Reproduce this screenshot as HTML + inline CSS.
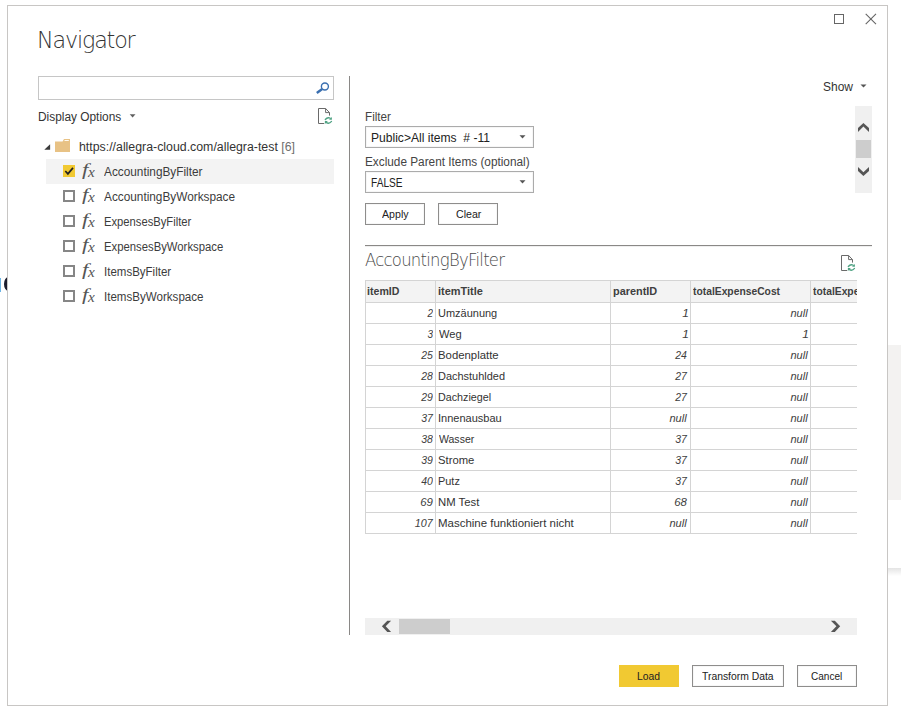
<!DOCTYPE html>
<html lang="en"><head><meta charset="utf-8"><title>Navigator</title>
<style>
html,body{margin:0;padding:0;}
body{width:901px;height:719px;position:relative;overflow:hidden;background:#fff;font-family:'Liberation Sans', sans-serif;}
.t{position:absolute;white-space:pre;line-height:20px;transform-origin:0 50%;}
.t.r{transform-origin:100% 50%;}
.a{position:absolute;}

.dlg{left:7px;top:5px;width:881px;height:701px;box-sizing:border-box;border:1px solid #c8c6c4;background:#fff;}
.box{box-sizing:border-box;border:1px solid #c6c6c6;background:#fff;}
.btn{box-sizing:border-box;border:1px solid #8e8d8c;background:#fff;box-shadow:inset 0 0 0 1px #f7f7f7;}
.cb{box-sizing:border-box;width:12px;height:12px;border:2px solid #868686;background:#fff;left:63px;}
.hl{background:#d4d4d4;height:1px;}
.vl{background:#d4d4d4;width:1px;}
svg{position:absolute;overflow:visible;}

</style></head><body>
<!-- desktop fragments visible behind the dialog -->
<div class="backdrop">
<div class="a" style="left:888px;top:345px;width:13px;height:155px;background:#f3f2f1"></div>
<div class="a" style="left:888px;top:568px;width:13px;height:8px;background:linear-gradient(#e4e4e4,#fff)"></div>
<div class="a" style="left:0;top:278px;width:1px;height:14px;background:#6cb4e4"></div>
<div class="a" style="left:4px;top:276.5px;width:9px;height:14px;box-sizing:border-box;border:3px solid #1c1c2c;border-radius:50%"></div>
</div>
<!-- Navigator dialog frame, title and window buttons -->
<header class="dialog-frame">
<div class="a dlg"></div>
<div class="a" style="left:834px;top:14px;width:10px;height:10px;box-sizing:border-box;border:1px solid #666"></div>
<svg style="left:865px;top:13px" width="12" height="12" viewBox="0 0 12 12"><path d="M0.7 0.9L11 11.2M11 0.9L0.7 11.2" stroke="#666" stroke-width="1.1" fill="none"/></svg>
<div class="a" style="left:349px;top:76px;width:1px;height:559px;background:#8a8886"></div>
<span class="t" style="left:37.30px;top:30px;font-size:23px;transform:scaleX(0.9667);font-family:'DejaVu Sans', 'Liberation Sans', sans-serif;color:#333;font-weight:200;letter-spacing:-1.2px;">Navigator</span>
</header>
<!-- left pane: search, display options, source tree -->
<aside class="tree-pane">
<div class="a box" style="left:38px;top:76px;width:296px;height:24px"></div>
<svg style="left:315px;top:81px" width="16" height="14" viewBox="0 0 16 14"><circle cx="9.9" cy="5.5" r="3.5" fill="none" stroke="#3a6fb0" stroke-width="1.4"/><path d="M7.2 8.1L1.8 12.1" stroke="#3a6fb0" stroke-width="2.5" stroke-linecap="butt"/></svg>
<svg style="left:129px;top:114px" width="8" height="5" viewBox="0 0 8 5"><path d="M0.7 0.3H6.5L3.6 3.4Z" fill="#606060"/></svg>
<svg style="left:318px;top:108px" width="16" height="18" viewBox="0 0 16 18">
<path d="M6.2 15.5H0.5V0.5H7.6L11.5 4.6V7.6" fill="none" stroke="#6a6a6a" stroke-width="1"/>
<path d="M7.6 0.5V4.6H11.5" fill="none" stroke="#6a6a6a" stroke-width="1"/>
<path d="M7.3 11.5Q9.5 8.7 12.4 10.3" fill="none" stroke="#4fa283" stroke-width="1.3" stroke-linecap="round"/>
<path d="M13.5 13.4Q11.3 16.2 8.4 14.7" fill="none" stroke="#4fa283" stroke-width="1.3" stroke-linecap="round"/>
<path d="M13.9 8.9V11.8H11Z" fill="#4fa283"/>
<path d="M6.9 16V13.1H9.8Z" fill="#4fa283"/>
</svg>
<svg style="left:44px;top:144px" width="7" height="6" viewBox="0 0 7 6"><path d="M6.1 0.2V5.8H0.3Z" fill="#3a3a3a"/></svg>
<svg style="left:55px;top:139px" width="15" height="13" viewBox="0 0 15 13"><path d="M0 2.6H7.6L9 0H15V13H0Z" fill="#e8c285"/><path d="M9.5 1.5H13.8" stroke="#fffaf0" stroke-width="1"/></svg>
<div class="a" style="left:46px;top:159px;width:288px;height:25px;background:#f3f3f3"></div>
<div class="a" style="left:63px;top:165px;width:12px;height:12px;background:#f1c932"></div>
<svg style="left:63px;top:165px" width="12" height="12" viewBox="0 0 12 12"><path d="M2.3 6L4.9 8.9L10 2.9" fill="none" stroke="#222" stroke-width="1.7"/></svg>
<div class="a cb" style="top:190px"></div>
<div class="a cb" style="top:215px"></div>
<div class="a cb" style="top:240px"></div>
<div class="a cb" style="top:265px"></div>
<div class="a cb" style="top:290px"></div>
<span class="t" style="left:38.11px;top:107px;font-size:12px;transform:scaleX(0.9904);color:#333;">Display Options</span>
<span class="t" style="left:78.97px;top:137px;font-size:12px;transform:scaleX(1.0279);color:#333;">https://allegra-cloud.com/allegra-test <span style="color:#6e6e6e">[6]</span></span>
<span class="t" style="left:104.30px;top:162px;font-size:12px;transform:scaleX(0.9850);color:#3c3c3c;">AccountingByFilter</span>
<span class="t" style="left:82.00px;top:159px;font-size:17.5px;transform:scaleX(1.3143);font-family:'Liberation Serif', serif;color:#555;font-style:italic;">f</span>
<span class="t" style="left:88.10px;top:162px;font-size:15.5px;transform:scaleX(0.9857);font-family:'Liberation Serif', serif;color:#555;font-style:italic;">x</span>
<span class="t" style="left:104.30px;top:187px;font-size:12px;transform:scaleX(0.9842);color:#3c3c3c;">AccountingByWorkspace</span>
<span class="t" style="left:82.00px;top:184px;font-size:17.5px;transform:scaleX(1.3143);font-family:'Liberation Serif', serif;color:#555;font-style:italic;">f</span>
<span class="t" style="left:88.10px;top:187px;font-size:15.5px;transform:scaleX(0.9857);font-family:'Liberation Serif', serif;color:#555;font-style:italic;">x</span>
<span class="t" style="left:104.27px;top:212px;font-size:12px;transform:scaleX(0.9348);color:#3c3c3c;">ExpensesByFilter</span>
<span class="t" style="left:82.00px;top:209px;font-size:17.5px;transform:scaleX(1.3143);font-family:'Liberation Serif', serif;color:#555;font-style:italic;">f</span>
<span class="t" style="left:88.10px;top:212px;font-size:15.5px;transform:scaleX(0.9857);font-family:'Liberation Serif', serif;color:#555;font-style:italic;">x</span>
<span class="t" style="left:104.26px;top:237px;font-size:12px;transform:scaleX(0.9424);color:#3c3c3c;">ExpensesByWorkspace</span>
<span class="t" style="left:82.00px;top:234px;font-size:17.5px;transform:scaleX(1.3143);font-family:'Liberation Serif', serif;color:#555;font-style:italic;">f</span>
<span class="t" style="left:88.10px;top:237px;font-size:15.5px;transform:scaleX(0.9857);font-family:'Liberation Serif', serif;color:#555;font-style:italic;">x</span>
<span class="t" style="left:104.34px;top:262px;font-size:12px;transform:scaleX(0.9594);color:#3c3c3c;">ItemsByFilter</span>
<span class="t" style="left:82.00px;top:259px;font-size:17.5px;transform:scaleX(1.3143);font-family:'Liberation Serif', serif;color:#555;font-style:italic;">f</span>
<span class="t" style="left:88.10px;top:262px;font-size:15.5px;transform:scaleX(0.9857);font-family:'Liberation Serif', serif;color:#555;font-style:italic;">x</span>
<span class="t" style="left:104.34px;top:287px;font-size:12px;transform:scaleX(0.9647);color:#3c3c3c;">ItemsByWorkspace</span>
<span class="t" style="left:82.00px;top:284px;font-size:17.5px;transform:scaleX(1.3143);font-family:'Liberation Serif', serif;color:#555;font-style:italic;">f</span>
<span class="t" style="left:88.10px;top:287px;font-size:15.5px;transform:scaleX(0.9857);font-family:'Liberation Serif', serif;color:#555;font-style:italic;">x</span>
</aside>
<!-- right pane: function parameters and data preview -->
<main class="preview-pane">
<svg style="left:860px;top:84px" width="8" height="5" viewBox="0 0 8 5"><path d="M0.5 0.5H6.5L3.5 3.6Z" fill="#555"/></svg>
<div class="a" style="left:855px;top:106px;width:17px;height:87px;background:#f0f0f0"></div>
<div class="a" style="left:856px;top:140px;width:15px;height:18px;background:#cdcdcd"></div>
<svg style="left:857px;top:123px" width="13" height="9" viewBox="0 0 13 9"><path d="M6.4 -0.1L12 5V8.9L6.4 3.6L1 8.9V5Z" fill="#555"/></svg>
<svg style="left:857px;top:167px" width="13" height="9" viewBox="0 0 13 9"><path d="M1 0L6.4 5.3L12 0V3.9L6.4 9.1L1 3.9Z" fill="#555"/></svg>
<div class="a box" style="left:365px;top:126px;width:169px;height:22px;border-color:#ababab;box-shadow:inset 0 0 0 1px #f6f6f6"></div>
<svg style="left:519px;top:135px" width="8" height="5" viewBox="0 0 8 5"><path d="M0.5 0.3H6.5L3.5 3.4Z" fill="#555"/></svg>
<div class="a box" style="left:365px;top:171px;width:169px;height:22px;border-color:#ababab;box-shadow:inset 0 0 0 1px #f6f6f6"></div>
<svg style="left:519px;top:180px" width="8" height="5" viewBox="0 0 8 5"><path d="M0.5 0.3H6.5L3.5 3.4Z" fill="#555"/></svg>
<div class="a btn" style="left:365px;top:203px;width:60px;height:22px"></div>
<div class="a btn" style="left:438px;top:203px;width:60px;height:22px"></div>
<div class="a" style="left:365px;top:245px;width:507px;height:1px;background:#8a8886"></div>
<div class="a" style="left:365px;top:246px;width:507px;height:1px;background:#efefef"></div>
<svg style="left:841px;top:255px" width="16" height="18" viewBox="0 0 16 18">
<path d="M6.2 15.5H0.5V0.5H7.6L11.5 4.6V7.6" fill="none" stroke="#6a6a6a" stroke-width="1"/>
<path d="M7.6 0.5V4.6H11.5" fill="none" stroke="#6a6a6a" stroke-width="1"/>
<path d="M7.3 11.5Q9.5 8.7 12.4 10.3" fill="none" stroke="#4fa283" stroke-width="1.3" stroke-linecap="round"/>
<path d="M13.5 13.4Q11.3 16.2 8.4 14.7" fill="none" stroke="#4fa283" stroke-width="1.3" stroke-linecap="round"/>
<path d="M13.9 8.9V11.8H11Z" fill="#4fa283"/>
<path d="M6.9 16V13.1H9.8Z" fill="#4fa283"/>
</svg>
<div class="a" style="left:365px;top:280px;width:492px;height:22px;background:#f3f3f3"></div>
<div class="a hl" style="left:365px;top:280px;width:492px"></div>
<div class="a hl" style="left:365px;top:302px;width:492px"></div>
<div class="a hl" style="left:365px;top:323px;width:492px"></div>
<div class="a hl" style="left:365px;top:344px;width:492px"></div>
<div class="a hl" style="left:365px;top:365px;width:492px"></div>
<div class="a hl" style="left:365px;top:386px;width:492px"></div>
<div class="a hl" style="left:365px;top:407px;width:492px"></div>
<div class="a hl" style="left:365px;top:428px;width:492px"></div>
<div class="a hl" style="left:365px;top:449px;width:492px"></div>
<div class="a hl" style="left:365px;top:470px;width:492px"></div>
<div class="a hl" style="left:365px;top:491px;width:492px"></div>
<div class="a hl" style="left:365px;top:512px;width:492px"></div>
<div class="a hl" style="left:365px;top:533px;width:492px"></div>
<div class="a vl" style="left:365px;top:280px;height:254px"></div>
<div class="a vl" style="left:435px;top:280px;height:254px"></div>
<div class="a vl" style="left:610px;top:280px;height:254px"></div>
<div class="a vl" style="left:690px;top:280px;height:254px"></div>
<div class="a vl" style="left:810px;top:280px;height:254px"></div>
<div class="a" style="left:365px;top:618px;width:492px;height:17px;background:#f0f0f0"></div>
<div class="a" style="left:399px;top:619px;width:51px;height:15px;background:#cdcdcd"></div>
<svg style="left:381px;top:620px" width="11" height="13" viewBox="0 0 11 13"><path d="M0.9 6.3L6.3 0.8H10.1L4.7 6.3L10.1 11.9H6.3Z" fill="#555"/></svg>
<svg style="left:830px;top:620px" width="11" height="13" viewBox="0 0 11 13"><path d="M10.2 6.3L4.8 0.8H0.9L6.4 6.3L0.9 11.9H4.8Z" fill="#555"/></svg>
<span class="t" style="left:823.00px;top:77px;font-size:12px;color:#333;">Show</span>
<span class="t" style="left:364.83px;top:107px;font-size:12px;transform:scaleX(0.9731);color:#444;">Filter</span>
<span class="t" style="left:370.89px;top:128px;font-size:12px;transform:scaleX(1.0068);color:#222;">Public&gt;All items&nbsp; # -11</span>
<span class="t" style="left:364.52px;top:152px;font-size:12px;transform:scaleX(0.9831);color:#444;">Exclude Parent Items (optional)</span>
<span class="t" style="left:371.26px;top:173px;font-size:12px;transform:scaleX(0.8444);color:#222;">FALSE</span>
<span class="t" style="left:382.00px;top:204px;font-size:11.5px;transform:scaleX(0.9241);color:#222;">Apply</span>
<span class="t" style="left:455.58px;top:204px;font-size:11.5px;transform:scaleX(0.9231);color:#222;">Clear</span>
<span class="t" style="left:364.69px;top:250px;font-size:18px;transform:scaleX(0.9132);font-family:'DejaVu Sans', 'Liberation Sans', sans-serif;color:#4a4a4a;font-weight:200;letter-spacing:-0.8px;">AccountingByFilter</span>
<span class="t" style="left:367.25px;top:281px;font-size:11.2px;transform:scaleX(0.9485);color:#404040;font-weight:bold;">itemID</span>
<span class="t" style="left:437.92px;top:281px;font-size:11.2px;transform:scaleX(0.9795);color:#404040;font-weight:bold;">itemTitle</span>
<span class="t" style="left:612.62px;top:281px;font-size:11.2px;transform:scaleX(0.9750);color:#404040;font-weight:bold;">parentID</span>
<span class="t" style="left:692.90px;top:281px;font-size:11.2px;transform:scaleX(0.9213);color:#404040;font-weight:bold;">totalExpenseCost</span>
<div class="a" style="left:811px;top:281px;width:46px;height:21px;overflow:hidden"><span class="t" style="left:1.80px;top:0px;font-size:11.2px;transform:scaleX(0.9213);color:#404040;font-weight:bold;">totalExpe</span></div>
<span class="t r" style="right:468.26px;top:303px;font-size:10.67px;transform:scaleX(0.9333);color:#404040;font-style:italic;">2</span>
<span class="t" style="left:437.67px;top:303px;font-size:10.67px;transform:scaleX(1.0304);color:#333;">Umzäunung</span>
<span class="t r" style="right:212.55px;top:303px;font-size:10.67px;transform:scaleX(1.1200);color:#404040;font-style:italic;">1</span>
<span class="t r" style="right:93.62px;top:303px;font-size:10.67px;transform:scaleX(1.0353);color:#404040;font-style:italic;">null</span>
<span class="t r" style="right:468.26px;top:324px;font-size:10.67px;transform:scaleX(0.9333);color:#404040;font-style:italic;">3</span>
<span class="t" style="left:438.70px;top:324px;font-size:10.67px;transform:scaleX(1.0429);color:#333;">Weg</span>
<span class="t r" style="right:212.55px;top:324px;font-size:10.67px;transform:scaleX(1.1200);color:#404040;font-style:italic;">1</span>
<span class="t r" style="right:92.15px;top:324px;font-size:10.67px;transform:scaleX(1.1200);color:#404040;font-style:italic;">1</span>
<span class="t r" style="right:468.34px;top:345px;font-size:10.67px;transform:scaleX(0.9833);color:#404040;font-style:italic;">25</span>
<span class="t" style="left:437.63px;top:345px;font-size:10.67px;transform:scaleX(1.0661);color:#333;">Bodenplatte</span>
<span class="t r" style="right:213.74px;top:345px;font-size:10.67px;transform:scaleX(0.9833);color:#404040;font-style:italic;">24</span>
<span class="t r" style="right:93.62px;top:345px;font-size:10.67px;transform:scaleX(1.0353);color:#404040;font-style:italic;">null</span>
<span class="t r" style="right:468.34px;top:366px;font-size:10.67px;transform:scaleX(0.9833);color:#404040;font-style:italic;">28</span>
<span class="t" style="left:437.67px;top:366px;font-size:10.67px;transform:scaleX(1.0281);color:#333;">Dachstuhlded</span>
<span class="t r" style="right:213.74px;top:366px;font-size:10.67px;transform:scaleX(0.9833);color:#404040;font-style:italic;">27</span>
<span class="t r" style="right:93.62px;top:366px;font-size:10.67px;transform:scaleX(1.0353);color:#404040;font-style:italic;">null</span>
<span class="t r" style="right:468.34px;top:387px;font-size:10.67px;transform:scaleX(0.9833);color:#404040;font-style:italic;">29</span>
<span class="t" style="left:437.69px;top:387px;font-size:10.67px;transform:scaleX(1.0078);color:#333;">Dachziegel</span>
<span class="t r" style="right:213.74px;top:387px;font-size:10.67px;transform:scaleX(0.9833);color:#404040;font-style:italic;">27</span>
<span class="t r" style="right:93.62px;top:387px;font-size:10.67px;transform:scaleX(1.0353);color:#404040;font-style:italic;">null</span>
<span class="t r" style="right:468.34px;top:408px;font-size:10.67px;transform:scaleX(0.9833);color:#404040;font-style:italic;">37</span>
<span class="t" style="left:437.67px;top:408px;font-size:10.67px;transform:scaleX(1.0333);color:#333;">Innenausbau</span>
<span class="t r" style="right:214.02px;top:408px;font-size:10.67px;transform:scaleX(1.0353);color:#404040;font-style:italic;">null</span>
<span class="t r" style="right:93.62px;top:408px;font-size:10.67px;transform:scaleX(1.0353);color:#404040;font-style:italic;">null</span>
<span class="t r" style="right:468.34px;top:429px;font-size:10.67px;transform:scaleX(0.9833);color:#404040;font-style:italic;">38</span>
<span class="t" style="left:438.70px;top:429px;font-size:10.67px;transform:scaleX(0.9861);color:#333;">Wasser</span>
<span class="t r" style="right:213.74px;top:429px;font-size:10.67px;transform:scaleX(0.9833);color:#404040;font-style:italic;">37</span>
<span class="t r" style="right:93.62px;top:429px;font-size:10.67px;transform:scaleX(1.0353);color:#404040;font-style:italic;">null</span>
<span class="t r" style="right:468.34px;top:450px;font-size:10.67px;transform:scaleX(0.9833);color:#404040;font-style:italic;">39</span>
<span class="t" style="left:437.64px;top:450px;font-size:10.67px;transform:scaleX(1.0576);color:#333;">Strome</span>
<span class="t r" style="right:213.74px;top:450px;font-size:10.67px;transform:scaleX(0.9833);color:#404040;font-style:italic;">37</span>
<span class="t r" style="right:93.62px;top:450px;font-size:10.67px;transform:scaleX(1.0353);color:#404040;font-style:italic;">null</span>
<span class="t r" style="right:468.34px;top:471px;font-size:10.67px;transform:scaleX(0.9833);color:#404040;font-style:italic;">40</span>
<span class="t" style="left:437.68px;top:471px;font-size:10.67px;transform:scaleX(1.0250);color:#333;">Putz</span>
<span class="t r" style="right:213.74px;top:471px;font-size:10.67px;transform:scaleX(0.9833);color:#404040;font-style:italic;">37</span>
<span class="t r" style="right:93.62px;top:471px;font-size:10.67px;transform:scaleX(1.0353);color:#404040;font-style:italic;">null</span>
<span class="t r" style="right:468.35px;top:492px;font-size:10.67px;transform:scaleX(1.0727);color:#404040;font-style:italic;">69</span>
<span class="t" style="left:437.64px;top:492px;font-size:10.67px;transform:scaleX(1.0632);color:#333;">NM Test</span>
<span class="t r" style="right:213.75px;top:492px;font-size:10.67px;transform:scaleX(1.0727);color:#404040;font-style:italic;">68</span>
<span class="t r" style="right:93.62px;top:492px;font-size:10.67px;transform:scaleX(1.0353);color:#404040;font-style:italic;">null</span>
<span class="t r" style="right:468.42px;top:513px;font-size:10.67px;transform:scaleX(1.0111);color:#404040;font-style:italic;">107</span>
<span class="t" style="left:437.62px;top:513px;font-size:10.67px;transform:scaleX(1.0760);color:#333;">Maschine funktioniert nicht</span>
<span class="t r" style="right:214.02px;top:513px;font-size:10.67px;transform:scaleX(1.0353);color:#404040;font-style:italic;">null</span>
<span class="t r" style="right:93.62px;top:513px;font-size:10.67px;transform:scaleX(1.0353);color:#404040;font-style:italic;">null</span>
</main>
<!-- dialog actions -->
<footer class="actions">
<div class="a" style="left:619px;top:665px;width:60px;height:22px;background:#f1c932"></div>
<div class="a btn" style="left:692px;top:665px;width:92px;height:22px"></div>
<div class="a btn" style="left:797px;top:665px;width:60px;height:22px"></div>
<span class="t" style="left:637.10px;top:666px;font-size:11.5px;transform:scaleX(0.9000);color:#222;">Load</span>
<span class="t" style="left:702.40px;top:666px;font-size:11.5px;transform:scaleX(0.9013);color:#222;">Transform Data</span>
<span class="t" style="left:811.13px;top:666px;font-size:11.5px;transform:scaleX(0.8735);color:#222;">Cancel</span>
</footer>
</body></html>
